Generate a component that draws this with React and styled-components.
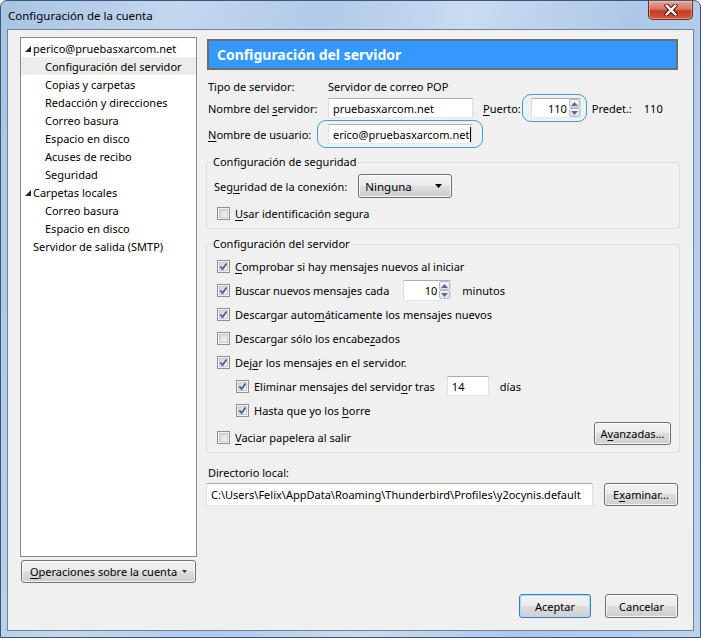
import React from "react";
import styled, { createGlobalStyle } from "styled-components";

const GlobalStyle = createGlobalStyle`
  html, body { margin: 0; padding: 0; background: #ffffff; }
  body { font-family: "Noto Sans", "Open Sans", sans-serif; font-size: 11px; color: #000; }
  * { box-sizing: border-box; }
`;

const Window = styled.div`
  width: 701px;
  height: 638px;
  display: flex;
  flex-direction: column;
  border: 1px solid #3f5573;
  border-radius: 7px 7px 0 0;
  padding: 0 6px 6px 6px;
  background: linear-gradient(100deg, #a8c3e3 0%, #c3d8ef 22%, #b0cae8 40%, #c9dcf1 58%, #adc8e7 78%, #bcd3ec 100%);
`;

const TitleBar = styled.div`
  height: 28px;
  display: flex;
  justify-content: space-between;
  align-items: flex-start;
`;

const Title = styled.div`
  padding: 7px 0 0 1px;
  font-size: 11.5px;
  color: #000;
`;

const CloseButton = styled.div`
  width: 45px;
  height: 19px;
  margin-right: 1px;
  border: 1px solid #6b2b20;
  border-top: none;
  border-radius: 0 0 5px 5px;
  background: linear-gradient(#e9a99a 0%, #d7735f 45%, #c23a22 55%, #d45a3f 100%);
  box-shadow: inset 0 0 0 1px rgba(255, 220, 210, 0.45);
  display: flex;
  align-items: center;
  justify-content: center;
`;

const Client = styled.div`
  flex: 1;
  display: flex;
  flex-direction: column;
  background: #f0f0f0;
  border: 1px solid #6f829c;
  padding: 7px 13px 12px 12px;
`;

const Main = styled.div`
  flex: 1;
  display: flex;
  gap: 9px;
  min-height: 0;
`;

const LeftCol = styled.div`
  width: 177px;
  display: flex;
  flex-direction: column;
  gap: 3px;
`;

const Tree = styled.div`
  flex: 1;
  background: #fff;
  border: 1px solid #828790;
  padding-top: 1px;
`;

const TreeRow = styled.div`
  height: 18px;
  display: flex;
  align-items: center;
  gap: 2px;
  padding-left: ${(p) => p.$indent}px;
  background: ${(p) => (p.$selected ? "#ececec" : "transparent")};
  white-space: nowrap;
`;

const Twisty = styled.svg`
  flex: none;
  margin-top: 1px;
`;

const Button = styled.div`
  height: ${(p) => p.$h || 23}px;
  width: ${(p) => (p.$w ? p.$w + "px" : "auto")};
  display: flex;
  align-items: center;
  justify-content: center;
  gap: 5px;
  border: 1px solid ${(p) => (p.$default ? "#3c7fb1" : "#707070")};
  border-radius: 3px;
  background: linear-gradient(#f2f2f2 0%, #ebebeb 49%, #dddddd 50%, #cfcfcf 100%);
  box-shadow: inset 0 0 0 1px ${(p) => (p.$default ? "#a9dcf8" : "rgba(255,255,255,0.75)")};
  white-space: nowrap;
  flex: none;
`;

const AccountButton = styled(Button)`
  margin-left: 1px;
  width: 175px;
`;

const RightCol = styled.div`
  flex: 1;
  display: flex;
  flex-direction: column;
  min-width: 0;
`;

const Header = styled.div`
  margin: 2px 2px 0 1px;
  height: 31px;
  background: #3399ff;
  border: 2px solid #6d6d6d;
  color: #fff;
  font-weight: 700;
  font-size: 14px;
  display: flex;
  align-items: center;
  padding-left: 8px;
`;

const InfoRow = styled.div`
  display: flex;
  align-items: center;
  height: ${(p) => p.$h}px;
  margin-top: ${(p) => p.$mt}px;
  padding-left: 2px;
  white-space: nowrap;
`;

const FieldLabel = styled.span`
  width: 120px;
  flex: none;
`;

const Gap = styled.span`
  margin-left: ${(p) => p.$ml}px;
  flex: none;
`;

const TextBox = styled.div`
  width: ${(p) => (p.$w ? p.$w + "px" : "auto")};
  flex: ${(p) => (p.$grow ? 1 : "none")};
  height: ${(p) => p.$h || 20}px;
  background: #fff;
  border: 1px solid #dbdfe6;
  border-top-color: #abadb3;
  border-bottom-color: #e3e9ef;
  display: flex;
  align-items: center;
  justify-content: ${(p) => (p.$right ? "flex-end" : "flex-start")};
  padding: 0 ${(p) => (p.$right ? 0 : 4)}px 0 ${(p) => (p.$right ? 0 : 4)}px;
  overflow: hidden;
  white-space: nowrap;
  min-width: 0;
`;

const Caret = styled.span`
  display: inline-block;
  width: 1px;
  height: 15px;
  background: #000;
  margin-left: 1px;
  flex: none;
`;

const FocusRing = styled.div`
  display: flex;
  align-items: center;
  border: 1px solid #3a9fd8;
  border-radius: 9px;
  padding: ${(p) => p.$pad};
  margin: ${(p) => p.$margin};
  flex: none;
`;

const SpinValue = styled.span`
  padding-right: 2px;
`;

const SpinCol = styled.div`
  display: flex;
  flex-direction: column;
  align-self: stretch;
  justify-content: center;
`;

const SpinBtn = styled.div`
  width: 11px;
  height: 9px;
  border: 1px solid #b4b9c2;
  border-radius: 2px;
  background: linear-gradient(#f6f7f9, #dfe3ea);
  display: flex;
  align-items: center;
  justify-content: center;
`;

const Group = styled.fieldset`
  margin: ${(p) => p.$mt}px 0 0 0;
  padding: ${(p) => p.$pt}px 7px ${(p) => p.$pb}px 7px;
  border: 1px solid #d5dfe5;
  border-radius: 3px;
  min-width: 0;
`;

const Legend = styled.legend`
  padding: 0 2px;
  margin-left: -3px;
  line-height: 16px;
  height: 16px;
`;

const SelectRow = styled.div`
  display: flex;
  align-items: center;
  height: 24px;
  white-space: nowrap;
`;

const Select = styled(Button)`
  width: 94px;
  height: 24px;
  justify-content: space-between;
  padding: 0 9px 0 6px;
  margin-left: 11px;
  font-size: 11.5px;
`;

const CheckRow = styled.div`
  display: flex;
  align-items: center;
  height: ${(p) => p.$h || 24}px;
  margin-top: ${(p) => p.$mt || 0}px;
  padding-left: ${(p) => p.$indent || 3}px;
  white-space: nowrap;
  gap: 5px;
`;

const LastRow = styled.div`
  display: flex;
  justify-content: space-between;
  height: 27px;
  padding-right: 1px;
`;

const BottomCheck = styled(CheckRow)`
  align-self: flex-end;
`;

const Avanzadas = styled(Button)`
  width: 77px;
  align-self: flex-start;
`;

const DirLabel = styled.div`
  height: 16px;
  margin-top: 11px;
  padding-left: 2px;
  display: flex;
  align-items: center;
`;

const DirRow = styled.div`
  display: flex;
  gap: 11px;
  margin-top: 3px;
  height: 23px;
  padding-right: 2px;
`;

const Footer = styled.div`
  margin-top: 11px;
  height: 24px;
  display: flex;
  justify-content: flex-end;
  gap: 14px;
  padding-right: 2px;
`;

const U = styled.span`
  text-decoration: underline;
  text-underline-offset: 2px;
`;

const Check = ({ checked }) => (
  <svg width="13" height="13" viewBox="0 0 13 13" style={{ flex: "none" }}>
    <defs>
      <linearGradient id="cbg" x1="0" y1="0" x2="1" y2="1">
        <stop offset="0" stopColor="#cfd2d6" />
        <stop offset="1" stopColor="#f7f7f7" />
      </linearGradient>
    </defs>
    <rect x="0.5" y="0.5" width="12" height="12" fill="#f4f4f4" stroke="#8e8f8f" />
    <rect x="2.5" y="2.5" width="8" height="8" fill="url(#cbg)" stroke="#c6c8cc" />
    {checked && (
      <path d="M3.4 6.4 L5.6 9 L9.6 3.4" fill="none" stroke="#4a5c92" strokeWidth="1.7" />
    )}
  </svg>
);

const Spinner = () => (
  <SpinCol>
    <SpinBtn>
      <svg width="7" height="4" viewBox="0 0 7 4">
        <path d="M0 4 L3.5 0 L7 4 Z" fill="#5a6b8c" />
      </svg>
    </SpinBtn>
    <SpinBtn>
      <svg width="7" height="4" viewBox="0 0 7 4">
        <path d="M0 0 L7 0 L3.5 4 Z" fill="#5a6b8c" />
      </svg>
    </SpinBtn>
  </SpinCol>
);

const treeItems = [
  { label: "perico@pruebasxarcom.net", indent: 4, twisty: true },
  { label: "Configuración del servidor", indent: 24, selected: true },
  { label: "Copias y carpetas", indent: 24 },
  { label: "Redacción y direcciones", indent: 24 },
  { label: "Correo basura", indent: 24 },
  { label: "Espacio en disco", indent: 24 },
  { label: "Acuses de recibo", indent: 24 },
  { label: "Seguridad", indent: 24 },
  { label: "Carpetas locales", indent: 4, twisty: true },
  { label: "Correo basura", indent: 24 },
  { label: "Espacio en disco", indent: 24 },
  { label: "Servidor de salida (SMTP)", indent: 12 },
];

export default function App() {
  return (
    <>
      <GlobalStyle />
      <Window>
        <TitleBar>
          <Title>Configuración de la cuenta</Title>
          <CloseButton>
            <svg width="14" height="12" viewBox="0 0 14 12">
              <path d="M2.5 1.5 L11.5 10.5 M11.5 1.5 L2.5 10.5" stroke="#4a1d14" strokeWidth="4.4" strokeLinecap="round" />
              <path d="M2.5 1.5 L11.5 10.5 M11.5 1.5 L2.5 10.5" stroke="#ffffff" strokeWidth="2.4" strokeLinecap="round" />
            </svg>
          </CloseButton>
        </TitleBar>
        <Client>
          <Main>
            <LeftCol>
              <Tree>
                {treeItems.map((it, i) => (
                  <TreeRow key={i} $indent={it.indent} $selected={it.selected}>
                    {it.twisty && (
                      <Twisty width="6" height="6" viewBox="0 0 6 6">
                        <path d="M6 0 L6 6 L0 6 Z" fill="#262626" />
                      </Twisty>
                    )}
                    <span>{it.label}</span>
                  </TreeRow>
                ))}
              </Tree>
              <AccountButton>
                <span>
                  <U>O</U>peraciones sobre la cuenta
                </span>
                <svg width="5" height="3" viewBox="0 0 5 3">
                  <path d="M0 0 L5 0 L2.5 3 Z" fill="#333" />
                </svg>
              </AccountButton>
            </LeftCol>
            <RightCol>
              <Header>Configuración del servidor</Header>
              <InfoRow $h={17} $mt={8}>
                <FieldLabel>Tipo de servidor:</FieldLabel>
                <span>Servidor de correo POP</span>
              </InfoRow>
              <InfoRow $h={22} $mt={2}>
                <FieldLabel>
                  Nombre del <U>s</U>ervidor:
                </FieldLabel>
                <TextBox $w={145}>pruebasxarcom.net</TextBox>
                <Gap $ml={10}>
                  <U>P</U>uerto:
                </Gap>
                <FocusRing $pad="3px 5px 3px 8px" $margin="-4px 0 -4px 1px">
                  <TextBox $w={50} $right>
                    <SpinValue>110</SpinValue>
                    <Spinner />
                  </TextBox>
                </FocusRing>
                <Gap $ml={5}>Predet.:</Gap>
                <Gap $ml={12}>110</Gap>
              </InfoRow>
              <InfoRow $h={28} $mt={1}>
                <FieldLabel>
                  <U>N</U>ombre de usuario:
                </FieldLabel>
                <FocusRing $pad="3px 10px" $margin="0 0 0 -11px">
                  <TextBox $w={144}>
                    <span>erico@pruebasxarcom.net</span>
                    <Caret />
                  </TextBox>
                </FocusRing>
              </InfoRow>

              <Group $mt={6} $pt={4} $pb={5}>
                <Legend>Configuración de seguridad</Legend>
                <SelectRow>
                  <span>
                    Seg<U>u</U>ridad de la conexión:
                  </span>
                  <Select>
                    <span>Ninguna</span>
                    <svg width="7" height="4" viewBox="0 0 7 4">
                      <path d="M0 0 L7 0 L3.5 4 Z" fill="#000" />
                    </svg>
                  </Select>
                </SelectRow>
                <CheckRow $h={20} $mt={5}>
                  <Check />
                  <span>
                    <U>U</U>sar identificación segura
                  </span>
                </CheckRow>
              </Group>

              <Group $mt={7} $pt={2} $pb={3}>
                <Legend>Configuración del servidor</Legend>
                <CheckRow>
                  <Check checked />
                  <span>
                    <U>C</U>omprobar si hay mensajes nuevos al iniciar
                  </span>
                </CheckRow>
                <CheckRow>
                  <Check checked />
                  <span>Buscar nuevos mensajes cada</span>
                  <Gap $ml={9}>
                    <TextBox $w={48} $h={21} $right>
                      <SpinValue>10</SpinValue>
                      <Spinner />
                    </TextBox>
                  </Gap>
                  <Gap $ml={6}>minutos</Gap>
                </CheckRow>
                <CheckRow>
                  <Check checked />
                  <span>
                    Descargar auto<U>m</U>áticamente los mensajes nuevos
                  </span>
                </CheckRow>
                <CheckRow>
                  <Check />
                  <span>
                    Descargar sólo los encabe<U>z</U>ados
                  </span>
                </CheckRow>
                <CheckRow>
                  <Check checked />
                  <span>
                    Dej<U>a</U>r los mensajes en el servidor.
                  </span>
                </CheckRow>
                <CheckRow $indent={22}>
                  <Check checked />
                  <span>
                    Eliminar mensajes del servid<U>o</U>r tras
                  </span>
                  <Gap $ml={7}>
                    <TextBox $w={42} $h={20}>14</TextBox>
                  </Gap>
                  <Gap $ml={6}>días</Gap>
                </CheckRow>
                <CheckRow $indent={22}>
                  <Check checked />
                  <span>
                    Hasta que yo los <U>b</U>orre
                  </span>
                </CheckRow>
                <LastRow>
                  <BottomCheck>
                    <Check />
                    <span>
                      <U>V</U>aciar papelera al salir
                    </span>
                  </BottomCheck>
                  <Avanzadas>
                    <span>
                      A<U>v</U>anzadas...
                    </span>
                  </Avanzadas>
                </LastRow>
              </Group>

              <DirLabel>Directorio local:</DirLabel>
              <DirRow>
                <TextBox $grow $h={23}>
                  {"C:\\Users\\Felix\\AppData\\Roaming\\Thunderbird\\Profiles\\y2ocynis.default"}
                </TextBox>
                <Button $w={74}>
                  <span>
                    E<U>x</U>aminar...
                  </span>
                </Button>
              </DirRow>
            </RightCol>
          </Main>
          <Footer>
            <Button $w={72} $h={24} $default>
              Aceptar
            </Button>
            <Button $w={73} $h={24}>
              Cancelar
            </Button>
          </Footer>
        </Client>
      </Window>
    </>
  );
}
